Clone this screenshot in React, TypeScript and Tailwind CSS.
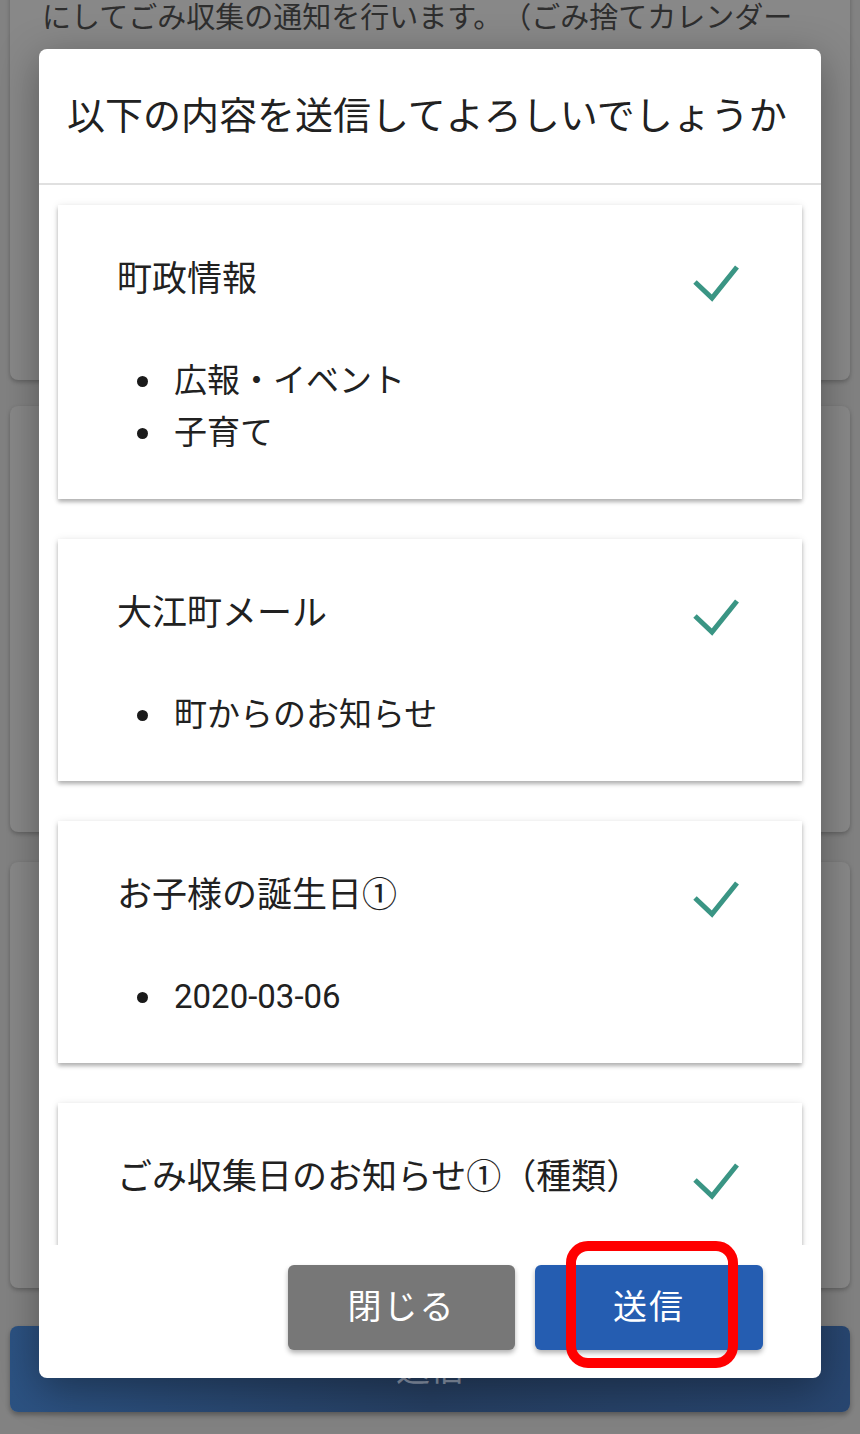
import React from "react";

type Item = { title: string; values: string[] };

const items: Item[] = [
  { title: "町政情報", values: ["広報・イベント", "子育て"] },
  { title: "大江町メール", values: ["町からのお知らせ"] },
  { title: "お子様の誕生日①", values: ["2020-03-06"] },
  { title: "ごみ収集日のお知らせ①（種類）", values: [] },
];

const font = { fontFamily: 'Roboto, "Noto Sans CJK JP", sans-serif' };

const CheckMark = () => (
  <svg width="48" height="40" viewBox="0 0 48 40" className="mr-[3px] mt-[6px] shrink-0">
    <polyline
      points="3,20 20,36 45,5"
      fill="none"
      stroke="#3a9584"
      strokeWidth="5"
      strokeLinejoin="miter"
    />
  </svg>
);

const ConfirmCard = ({ item }: { item: Item }) => (
  <div className="bg-white px-[59px] py-[40px] shadow-[0_3px_4px_rgba(0,0,0,0.28),0_0_8px_rgba(0,0,0,0.08)]">
    <div className="flex h-[68px] items-center justify-between">
      <span className="text-[35px] text-[#212121] leading-none">{item.title}</span>
      <CheckMark />
    </div>
    {item.values.length > 0 && (
      <ul className="mt-[42px]">
        {item.values.map((v) => (
          <li key={v} className="flex h-[52px] items-center text-[33px] text-[#212121]">
            <span className="ml-[20px] mr-[26px] h-[11px] w-[11px] rounded-full bg-[#1a1a1a]" />
            {v}
          </li>
        ))}
      </ul>
    )}
  </div>
);

export default function App() {
  return (
    <div
      className="relative h-[1434px] w-[860px] overflow-hidden bg-[#828282] [text-spacing-trim:space-all]"
      style={font}
    >
      {/* page behind the overlay */}
      <div className="flex flex-col px-[10px]">
        <div className="mt-[-40px] h-[420px] rounded-lg bg-[#888888] pl-[32px] pt-[39px] shadow-[0_2px_4px_rgba(0,0,0,0.25)]">
          <p className="text-[29px] leading-[38px] text-[#2e2e2e]">
            にしてごみ収集の通知を行います。（ごみ捨てカレンダー
          </p>
        </div>
        <div className="mt-[26px] h-[426px] rounded-lg bg-[#888888] shadow-[0_2px_4px_rgba(0,0,0,0.25)]" />
        <div className="mt-[30px] h-[426px] rounded-lg bg-[#888888] shadow-[0_2px_4px_rgba(0,0,0,0.25)]" />
        <div className="mt-[38px] flex h-[86px] items-center justify-center rounded-lg bg-gradient-to-r from-[#2c5282] via-[#263f62] to-[#284670] text-[34px] text-[#8b98ad] shadow-[0_3px_5px_rgba(0,0,0,0.3)]">
          送信
        </div>
      </div>

      {/* dialog */}
      <div className="absolute left-[39px] top-[49px] flex h-[1329px] w-[782px] flex-col overflow-hidden rounded-lg bg-white shadow-[0_10px_40px_rgba(0,0,0,0.35)]">
        <div className="flex h-[136px] shrink-0 items-center border-b-2 border-[#e0e0e0] pl-[28px]">
          <h2 className="text-[38px] leading-none text-[#212121]">以下の内容を送信してよろしいでしょうか</h2>
        </div>
        <div className="h-[1060px] shrink-0 overflow-hidden px-[19px] pt-[20px]">
          <div className="flex flex-col gap-[40px]">
            {items.map((it) => (
              <ConfirmCard key={it.title} item={it} />
            ))}
          </div>
        </div>
        <div className="flex flex-1 items-start justify-end gap-[20px] pr-[58px] pt-[20px]">
          <button className="h-[85px] w-[227px] rounded-md bg-[#777777] text-[34px] tracking-[2px] text-white shadow-[0_3px_5px_rgba(0,0,0,0.3)]">
            閉じる
          </button>
          <button className="h-[85px] w-[228px] rounded-md bg-[#255db1] text-[34px] tracking-[2px] text-white shadow-[0_3px_5px_rgba(0,0,0,0.3)]">
            送信
          </button>
        </div>
      </div>

      {/* red annotation frame */}
      <div className="absolute left-[566px] top-[1241px] h-[127px] w-[172px] rounded-[22px] border-[10px] border-[#ff0000]" />
    </div>
  );
}
